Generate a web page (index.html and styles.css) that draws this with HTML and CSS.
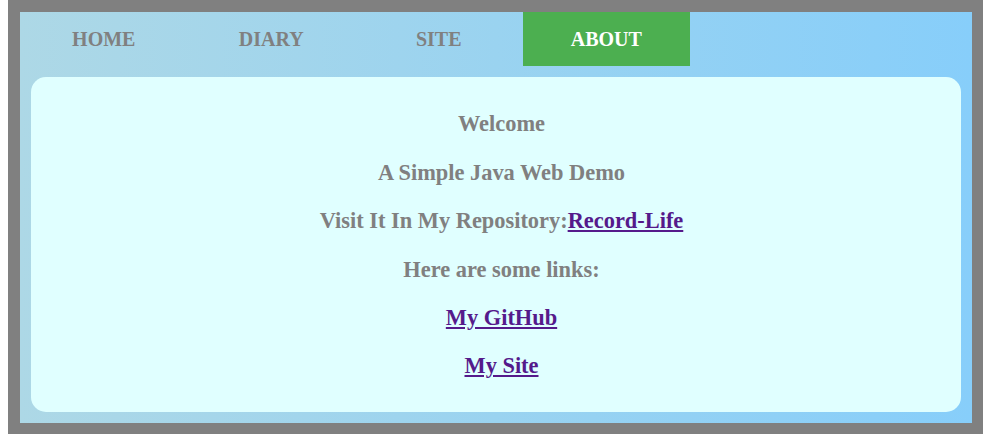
FILE: index.html
```html
<!DOCTYPE html>
<html lang="en">
<head>
<meta charset="utf-8">
<title>Record-Life</title>
<link rel="stylesheet" href="styles.css">
</head>
<body>
<div class="frame">
  <ul class="nav">
    <li class="nav-item"><a href="#">HOME</a></li>
    <li class="nav-item"><a href="#">DIARY</a></li>
    <li class="nav-item"><a href="#">SITE</a></li>
    <li class="nav-item active"><a href="#">ABOUT</a></li>
  </ul>
  <div class="content">
    <p>Welcome</p>
    <p>A Simple Java Web Demo</p>
    <p>Visit It In My Repository:<a class="link" href="#">Record-Life</a></p>
    <p>Here are some links:</p>
    <p><a class="link" href="#">My GitHub</a></p>
    <p><a class="link" href="#">My Site</a></p>
  </div>
</div>
</body>
</html>
```
FILE: styles.css
```css
html, body {
  margin: 0;
  padding: 0;
  background: #ffffff;
}
body {
  font-family: "Liberation Serif", "Times New Roman", serif;
}
.frame {
  margin-left: 8px;
  width: 952px;
  height: 411px;
  border-style: solid;
  border-color: #808080;
  border-width: 12px 11px 11px 12px;
  background: linear-gradient(to right, #add8e6, #87cefa);
  display: flex;
  flex-direction: column;
}
.nav {
  list-style: none;
  margin: 0;
  padding: 0;
  display: flex;
  height: 54px;
}
.nav-item {
  width: 167.5px;
  height: 54px;
  text-align: center;
}
.nav-item a {
  display: block;
  line-height: 54px;
  font-size: 20px;
  font-weight: bold;
  color: #808080;
  text-decoration: none;
}
.nav-item.active {
  background: #4caf50;
}
.nav-item.active a {
  color: #ffffff;
}
.content {
  margin: 11px;
  height: 335px;
  box-sizing: border-box;
  padding: 12px 0 12px 11px;
  background: #e0ffff;
  border-radius: 15px;
  text-align: center;
  font-size: 22.4px;
  font-weight: bold;
  color: #808080;
}
.content p {
  margin: 22.4px 0;
  line-height: 26px;
}
.link {
  color: #551a8b;
  text-decoration: underline;
}
```
